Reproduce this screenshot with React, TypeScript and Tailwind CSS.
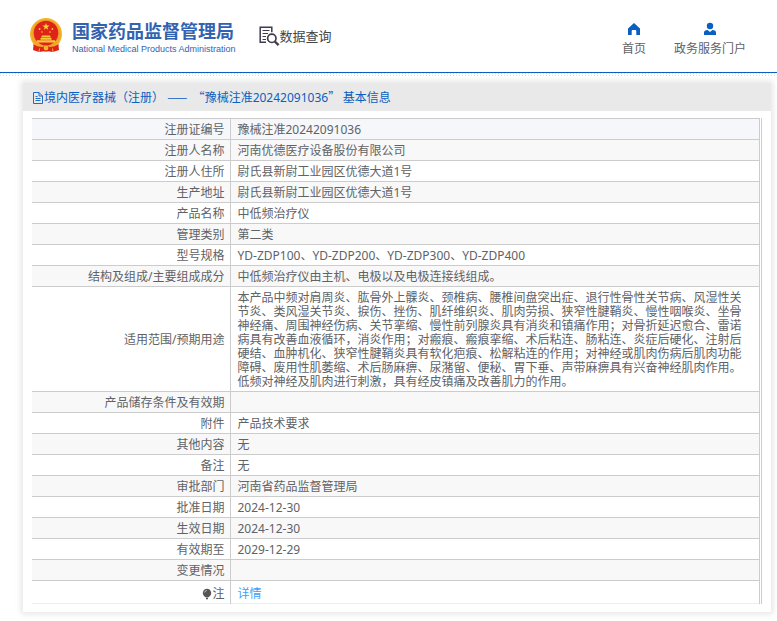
import type { ReactNode } from 'react'

const rows: { label: ReactNode; value: ReactNode }[] = [
  { label: '注册证编号', value: '豫械注准20242091036' },
  { label: '注册人名称', value: '河南优德医疗设备股份有限公司' },
  { label: '注册人住所', value: '尉氏县新尉工业园区优德大道1号' },
  { label: '生产地址', value: '尉氏县新尉工业园区优德大道1号' },
  { label: '产品名称', value: '中低频治疗仪' },
  { label: '管理类别', value: '第二类' },
  { label: '型号规格', value: 'YD-ZDP100、YD-ZDP200、YD-ZDP300、YD-ZDP400' },
  { label: '结构及组成/主要组成成分', value: '中低频治疗仪由主机、电极以及电极连接线组成。' },
  {
    label: '适用范围/预期用途',
    value:
      '本产品中频对肩周炎、肱骨外上髁炎、颈椎病、腰椎间盘突出症、退行性骨性关节病、风湿性关节炎、类风湿关节炎、捩伤、挫伤、肌纤维织炎、肌肉劳损、狭窄性腱鞘炎、慢性咽喉炎、坐骨神经痛、周围神经伤病、关节挛缩、慢性前列腺炎具有消炎和镇痛作用；对骨折延迟愈合、雷诺病具有改善血液循环，消炎作用；对瘢痕、瘢痕挛缩、术后粘连、肠粘连、炎症后硬化、注射后硬结、血肿机化、狭窄性腱鞘炎具有软化疤痕、松解粘连的作用；对神经或肌肉伤病后肌肉功能障碍、废用性肌萎缩、术后肠麻痹、尿潴留、便秘、胃下垂、声带麻痹具有兴奋神经肌肉作用。低频对神经及肌肉进行刺激，具有经皮镇痛及改善肌力的作用。',
  },
  { label: '产品储存条件及有效期', value: '' },
  { label: '附件', value: '产品技术要求' },
  { label: '其他内容', value: '无' },
  { label: '备注', value: '无' },
  { label: '审批部门', value: '河南省药品监督管理局' },
  { label: '批准日期', value: '2024-12-30' },
  { label: '生效日期', value: '2024-12-30' },
  { label: '有效期至', value: '2029-12-29' },
  { label: '变更情况', value: '' },
]

function Emblem() {
  return (
    <svg viewBox="0 0 32 36" className="h-9 w-8 shrink-0" aria-hidden="true">
      <path d="M4 23 3 32l6 2 7-1 7 1 6-2-1-9z" fill="#de2318" />
      <circle cx="16" cy="16" r="16" fill="#f5b52e" />
      <circle cx="16" cy="16" r="14.6" fill="#f0a428" />
      <circle cx="16" cy="15" r="12.3" fill="#de2318" />
      <path d="M16 5l.9 2.6h2.7l-2.200 1.600.8 2.600-2.200-1.600-2.200 1.600.8-2.600-2.200-1.600h2.700z" fill="#fbd23c" />
      <g fill="#fbc83c">
        <circle cx="9.600" cy="11" r=".9" />
        <circle cx="22.400" cy="11" r=".9" />
        <circle cx="12" cy="14" r=".8" />
        <circle cx="20" cy="14" r=".8" />
        <path d="M12 17.500h8l1 2H11zM10.500 20h11v1.800h-11zM7 22.300h18v2.200H7z" />
      </g>
      <path d="M3.500 26.500q6 3 9.500 2.500a3.400 3.400 0 0 1 6 0q3.500.500 9.500-2.500l-1 4q-5 2.500-8.500 1.500a3.500 3.500 0 0 1-6 0q-3.500 1-8.500-1.500z" fill="#de2318" />
      <circle cx="16" cy="30" r="2.400" fill="#f5b52e" />
      <path d="M9.500 30.500 9 34M22.500 30.500 23 34" stroke="#f5b52e" />
    </svg>
  )
}

function SearchDocIcon() {
  return (
    <svg viewBox="0 0 21 20" className="h-5 w-[21px] shrink-0" fill="none" stroke="#3f3b4d" aria-hidden="true">
      <path d="M7 16.200H1.200V1.200h11.600v5" strokeWidth="1.500" />
      <path d="M3.500 4.500h7M3.500 7.500h5.500M3.500 10.500h3.500M3.500 13.500h3.500" strokeWidth="1.200" />
      <circle cx="12.800" cy="12.300" r="4.200" strokeWidth="1.700" />
      <path d="M15.800 15.500l3.800 3.600" strokeWidth="2.400" />
    </svg>
  )
}

function HomeIcon() {
  return (
    <svg viewBox="0 0 14 14" className="h-3.5 w-3.5" fill="#0a5fc0" aria-hidden="true">
      <path d="M7 1 1 6.400V13h3.700V9a1 1 0 0 1 1-1h2.600a1 1 0 0 1 1 1v4H13V6.400z" />
    </svg>
  )
}

function UserIcon() {
  return (
    <svg viewBox="0 0 14 14" className="h-3.5 w-3.5" fill="#0a5fc0" aria-hidden="true">
      <circle cx="7" cy="4" r="3.200" />
      <path d="M1 13v-2.200Q1 8 4.600 8L7 10l2.400-2Q13 8 13 10.800V13z" />
    </svg>
  )
}

function FileIcon() {
  return (
    <svg viewBox="0 0 12 12" className="h-3 w-3 shrink-0" fill="none" stroke="#0a5fc0" aria-hidden="true">
      <path d="M1.500.5h5.500l3.500 3.500v7.500h-9zM7 .5V4h3.500M3.500 4.500h2M3.500 6.500h5M3.500 8.500h5" strokeWidth=".9" />
    </svg>
  )
}

function BulbIcon() {
  return (
    <svg viewBox="0 0 10 12" className="h-3 w-2.5" aria-hidden="true">
      <path d="M5 .8a4.200 4.200 0 0 0-2.400 7.600L4 9.500h2l1.400-1.100A4.200 4.200 0 0 0 5 .8z" fill="#555" />
      <path d="M4 10h2v1.200H4z" fill="#555" />
      <path d="M2.600 4.500Q3 2.700 4.800 2.400" stroke="#ddd" strokeWidth=".8" fill="none" />
    </svg>
  )
}

export default function App() {
  return (
    <div className="bg-white font-['Noto_Sans','Noto_Sans_CJK_SC',sans-serif] text-xs text-[#606266]">
      <header className="flex h-[73px] items-center justify-between border-b border-[#0a5fc0] pr-[31px] pl-[30px]">
        <div className="flex items-center">
          <a href="#" className="flex items-center gap-[10px]">
            <Emblem />
            <span className="flex flex-col pt-[3px] font-['Liberation_Sans','Noto_Sans_CJK_SC',sans-serif] text-[#3363b0]">
              <span className="text-lg leading-[22px] font-bold">国家药品监督管理局</span>
              <span className="text-[9px] leading-3">National Medical Products Administration</span>
            </span>
          </a>
          <a href="#" className="ml-[23px] flex items-center">
            <SearchDocIcon />
            <span className="text-[13px] leading-5 text-[#444]">数据查询</span>
          </a>
        </div>
        <nav className="flex gap-7 pt-[7px]">
          <a href="#" className="flex flex-col items-center gap-[5px] leading-4">
            <HomeIcon />
            首页
          </a>
          <a href="#" className="flex flex-col items-center gap-[5px] leading-4">
            <UserIcon />
            政务服务门户
          </a>
        </nav>
      </header>
      <div className="h-[3px] bg-[conic-gradient(#fff_75%,#dcdcdc_0)] bg-[size:3px_2px]" />

      <main className="px-[6px] pt-[7px] pb-[10px] pl-[23px]">
        <section className="bg-white shadow-[0_0_6px_2px_rgba(0,0,0,0.1)]">
          <h1 className="flex h-7 items-center bg-[#e9e9e9] pt-px pl-[9px] text-[#0a5fc0]">
            <FileIcon />
            <span>
              境内医疗器械（注册）&nbsp;
              <span className="font-['Noto_Sans_CJK_SC',sans-serif]">——&nbsp;&nbsp;“</span>
              豫械注准20242091036
              <span className="font-['Noto_Sans_CJK_SC',sans-serif]">”&nbsp;</span>
              基本信息
            </span>
          </h1>
          <div className="px-[9px] pt-[7px] pb-2">
            <div className="border-r border-[#cccccf] pr-px">
              <table className="w-full table-fixed border-collapse border-t border-b border-t-[#ccc] border-b-[#ebeef5] leading-[14px]">
                <colgroup>
                  <col className="w-[198px]" />
                  <col />
                </colgroup>
                <tbody>
                  {rows.map((row, i) => (
                    <tr key={i} className="border-b border-[#ccc] first:bg-[#f5f7fa] even:bg-[#f8f8f8]">
                      <th scope="row" className="h-[21px] border-r border-[#ccc] pt-1 pr-[5px] pb-0.5 text-right font-normal">
                        {row.label}
                      </th>
                      <td className="border-r border-[#ccc] pt-1 pr-[6px] pb-0.5 pl-[7px]">{row.value}</td>
                    </tr>
                  ))}
                  <tr>
                    <th scope="row" className="h-[23px] border-r border-[#ccc] pt-1 pr-[5px] font-normal">
                      <span className="flex items-center justify-end">
                        <BulbIcon />注
                      </span>
                    </th>
                    <td className="border-r border-[#ccc] pt-1 pr-[6px] pl-[7px]">
                      <a href="#" className="text-[#409eff]">
                        详情
                      </a>
                    </td>
                  </tr>
                </tbody>
              </table>
            </div>
          </div>
        </section>
      </main>
    </div>
  )
}
